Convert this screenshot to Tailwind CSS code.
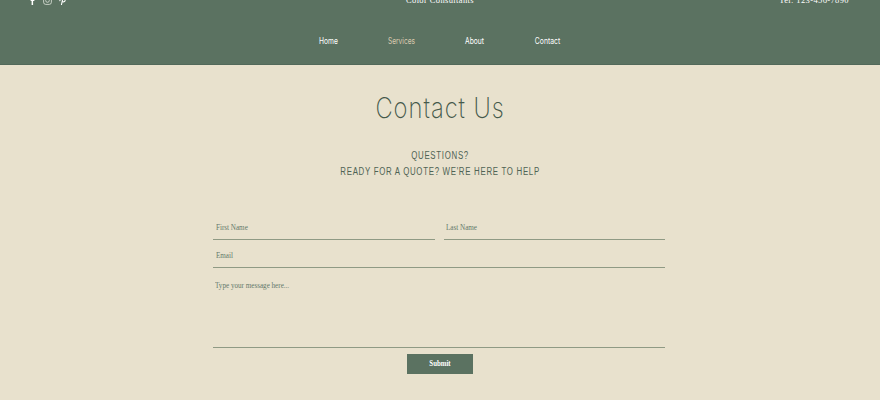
<!DOCTYPE html>
<html><head><meta charset="utf-8"><script src="https://cdn.jsdelivr.net/npm/@tailwindcss/browser@4"></script></head>
<body class="w-[880px] h-[400px] overflow-hidden bg-[#e8e1cd] antialiased">
<header class="h-[65px] bg-[#5b7261] border-b border-[#52695a] overflow-hidden relative">
  <div class="grid grid-cols-3 items-start h-[6px] pl-[28px] pr-[30px] text-white font-['Liberation_Serif',serif] text-[8.5px] tracking-[.38px] leading-[12px]">
    <div class="flex gap-[6px] items-center -mt-[4px]">
      <svg class="w-[9px] h-[9px]" viewBox="0 0 9 9"><path d="M3.6 9V5H2.6V3.6h1V2.500C3.6 1.200 4.300.6 5.400.6h1.100V2h-.8c-.5 0-.6.2-.6.6v1h1.400L6.300 5H5.100v4z" fill="#fff"/></svg>
      <svg class="w-[9px] h-[9px]" viewBox="0 0 9 9" fill="none" stroke="#dfe5dc" stroke-width=".8"><rect x=".6" y=".6" width="7.800" height="7.800" rx="2.200"/><circle cx="4.500" cy="4.500" r="1.800"/></svg>
      <svg class="w-[9px] h-[9px]" viewBox="0 0 9 9" fill="none" stroke="#fff" stroke-width="1.100"><path d="M3.400 9l1.200-5.500M2 5.200C1.500 3 3 1.500 4.700 1.500c1.800 0 2.800 1.200 2.400 2.800C6.800 5.800 5.300 6.200 4.200 5.500"/></svg>
    </div>
    <div class="text-center -mt-[6px] pl-[2px]">Color Consultants</div>
    <div class="text-right -mt-[6px] pr-[1px]">Tel: 123-456-7890</div>
  </div>
  <nav class="flex justify-center mt-[29px] ml-[-4px] font-['Inter',sans-serif] text-[8.5px] leading-[12px] text-white">
    <a class="w-[73px] text-center scale-x-[.79]">Home</a>
    <a class="w-[73px] text-center scale-x-[.78] text-[#d8c9ae]">Services</a>
    <a class="w-[73px] text-center scale-x-[.79]">About</a>
    <a class="w-[73px] text-center scale-x-[.8]">Contact</a>
  </nav>
</header>
<main class="flex flex-col items-center text-[#4f6354]">
  <h1 class="mt-[25px] font-['Inter',sans-serif] font-extralight text-[28px] leading-[36px] tracking-[1.1px] text-[#45594b] scale-x-[.85]">Contact Us</h1>
  <p class="mt-[22px] font-['Liberation_Sans',sans-serif] text-[10px] leading-[15.5px] tracking-[.9px] text-center scale-x-[.785]">QUESTIONS?<br>READY FOR A QUOTE? WE'RE HERE TO HELP</p>
  <form class="w-[452px] mt-[33px] ml-[-2px] font-['Liberation_Serif',serif] text-[9px] text-[#64796a]">
    <div class="flex gap-[9px]">
      <div class="flex-1 h-[28px] border-b border-[#8f9a84] pl-[3px] pt-[9px] leading-[12px]"><span class="block origin-left scale-x-[.79]">First Name</span></div>
      <div class="flex-1 h-[28px] border-b border-[#8f9a84] pl-[2px] pt-[9px] leading-[12px]"><span class="block origin-left scale-x-[.79]">Last Name</span></div>
    </div>
    <div class="h-[28px] border-b border-[#8f9a84] pl-[3px] pt-[9px] leading-[12px]"><span class="block origin-left scale-x-[.79]">Email</span></div>
    <div class="h-[80px] border-b border-[#8f9a84] pl-[2px] pt-[11px] leading-[12px]"><span class="block origin-left scale-x-[.79]">Type your message here...</span></div>
    <div class="flex justify-center pl-[2px] mt-[6px]">
      <button class="w-[66px] h-[20px] bg-[#5b7261] text-white text-[9px] font-bold"><span class="block scale-x-[.76]">Submit</span></button>
    </div>
  </form>
</main>
</body></html>
